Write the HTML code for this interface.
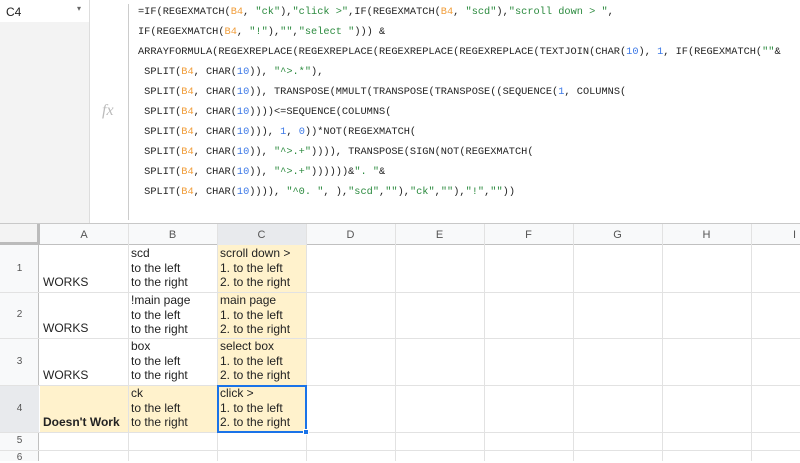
<!DOCTYPE html>
<html><head><style>
*{margin:0;padding:0;box-sizing:border-box}
body{width:800px;height:461px;overflow:hidden;background:#fff;font-family:"Liberation Sans",Arial,sans-serif;position:relative}
.a{position:absolute}
.f{font-family:"Liberation Mono",monospace;font-size:10.3px;color:#222;white-space:pre;line-height:20px}
.o{color:#f09d3a}.n{color:#3b78e7}.s{color:#2b8a3e}
.ch{font-size:11px;color:#555;text-align:center;line-height:20px;top:225px;height:20px}
.rn{font-size:10px;color:#555;text-align:center;width:39px;left:0}
.c{font-size:12px;color:#222;line-height:14.5px;white-space:pre}
.vl{width:1px;background:#e2e2e2}
.hl{height:1px;background:#e2e2e2}
</style></head><body>
<div class="a" style="left:0;top:0;width:90px;height:22px;background:#fff"></div>
<div class="a" style="left:0;top:22px;width:90px;height:202px;background:#f3f3f3"></div>
<div class="a" style="left:6px;top:5px;font-size:12px;color:#222">C4</div>
<div class="a" style="left:77px;top:4px;font-size:8px;color:#666">▾</div>
<div class="a" style="left:89px;top:0;width:1px;height:224px;background:#ddd"></div>
<div class="a" style="left:102px;top:102px;font-family:'Liberation Serif',serif;font-style:italic;font-size:16px;color:#bbb">fx</div>
<div class="a" style="left:128px;top:4px;width:1px;height:216px;background:#ccc"></div>
<div class="a f" style="left:138px;top:2px">=IF(REGEXMATCH(<span class="o">B4</span>, <span class="s">"ck"</span>),<span class="s">"click &gt;"</span>,IF(REGEXMATCH(<span class="o">B4</span>, <span class="s">"scd"</span>),<span class="s">"scroll down &gt; "</span>,
IF(REGEXMATCH(<span class="o">B4</span>, <span class="s">"!"</span>),<span class="s">""</span>,<span class="s">"select "</span>))) &amp;
ARRAYFORMULA(REGEXREPLACE(REGEXREPLACE(REGEXREPLACE(REGEXREPLACE(TEXTJOIN(CHAR(<span class="n">10</span>), <span class="n">1</span>, IF(REGEXMATCH(<span class="s">""</span>&amp;
 SPLIT(<span class="o">B4</span>, CHAR(<span class="n">10</span>)), <span class="s">"^&gt;.*"</span>),
 SPLIT(<span class="o">B4</span>, CHAR(<span class="n">10</span>)), TRANSPOSE(MMULT(TRANSPOSE(TRANSPOSE((SEQUENCE(<span class="n">1</span>, COLUMNS(
 SPLIT(<span class="o">B4</span>, CHAR(<span class="n">10</span>))))&lt;=SEQUENCE(COLUMNS(
 SPLIT(<span class="o">B4</span>, CHAR(<span class="n">10</span>))), <span class="n">1</span>, <span class="n">0</span>))*NOT(REGEXMATCH(
 SPLIT(<span class="o">B4</span>, CHAR(<span class="n">10</span>)), <span class="s">"^&gt;.+"</span>)))), TRANSPOSE(SIGN(NOT(REGEXMATCH(
 SPLIT(<span class="o">B4</span>, CHAR(<span class="n">10</span>)), <span class="s">"^&gt;.+"</span>))))))&amp;<span class="s">". "</span>&amp;
 SPLIT(<span class="o">B4</span>, CHAR(<span class="n">10</span>)))), <span class="s">"^0. "</span>, ),<span class="s">"scd"</span>,<span class="s">""</span>),<span class="s">"ck"</span>,<span class="s">""</span>),<span class="s">"!"</span>,<span class="s">""</span>))</div>
<div class="a" style="left:0;top:223px;width:800px;height:1px;background:#c8c8c8"></div>
<div class="a" style="left:0;top:224px;width:800px;height:21px;background:#f8f9fa;border-bottom:1px solid #c0c0c0"></div>
<div class="a" style="left:0;top:224px;width:40px;height:21px;background:#f3f3f3;border-right:3px solid #bbb;border-bottom:3px solid #bbb"></div>
<div class="a" style="left:0;top:245px;width:39px;height:216px;background:#f8f9fa;border-right:1px solid #c0c0c0"></div>
<div class="a" style="left:217px;top:224px;width:89px;height:21px;background:#e8eaed"></div>
<div class="a" style="left:0;top:385px;width:39px;height:47px;background:#e8eaed"></div>
<div class="a ch" style="left:40px;width:88px">A</div>
<div class="a ch" style="left:128px;width:89px">B</div>
<div class="a ch" style="left:217px;width:89px">C</div>
<div class="a ch" style="left:306px;width:89px">D</div>
<div class="a ch" style="left:395px;width:89px">E</div>
<div class="a ch" style="left:484px;width:89px">F</div>
<div class="a ch" style="left:573px;width:89px">G</div>
<div class="a ch" style="left:662px;width:89px">H</div>
<div class="a ch" style="left:751px;width:89px;text-align:left;padding-left:42px">I</div>
<div class="a rn" style="top:263px">1</div>
<div class="a rn" style="top:309px">2</div>
<div class="a rn" style="top:356px">3</div>
<div class="a rn" style="top:403px">4</div>
<div class="a rn" style="top:435px">5</div>
<div class="a rn" style="top:452px">6</div>
<div class="a" style="left:217px;top:245px;width:89px;height:187px;background:#fff2cc"></div>
<div class="a" style="left:40px;top:385px;width:177px;height:47px;background:#fff2cc"></div>
<div class="a vl" style="left:128px;top:224px;height:237px"></div>
<div class="a vl" style="left:217px;top:224px;height:237px"></div>
<div class="a vl" style="left:306px;top:224px;height:237px"></div>
<div class="a vl" style="left:395px;top:224px;height:237px"></div>
<div class="a vl" style="left:484px;top:224px;height:237px"></div>
<div class="a vl" style="left:573px;top:224px;height:237px"></div>
<div class="a vl" style="left:662px;top:224px;height:237px"></div>
<div class="a vl" style="left:751px;top:224px;height:237px"></div>
<div class="a hl" style="left:0;top:292px;width:800px"></div>
<div class="a hl" style="left:0;top:338px;width:800px"></div>
<div class="a hl" style="left:0;top:385px;width:800px"></div>
<div class="a hl" style="left:0;top:432px;width:800px"></div>
<div class="a hl" style="left:0;top:450px;width:800px"></div>
<div class="a c" style="left:43px;top:275px">WORKS</div>
<div class="a c" style="left:43px;top:321px">WORKS</div>
<div class="a c" style="left:43px;top:368px">WORKS</div>
<div class="a c" style="left:43px;top:415px;font-weight:bold">Doesn't Work</div>
<div class="a c" style="left:131px;top:246px">scd
to the left
to the right</div>
<div class="a c" style="left:131px;top:293px">!main page
to the left
to the right</div>
<div class="a c" style="left:131px;top:339px">box
to the left
to the right</div>
<div class="a c" style="left:131px;top:386px">ck
to the left
to the right</div>
<div class="a c" style="left:220px;top:246px">scroll down &gt;
1. to the left
2. to the right</div>
<div class="a c" style="left:220px;top:293px">main page
1. to the left
2. to the right</div>
<div class="a c" style="left:220px;top:339px">select box
1. to the left
2. to the right</div>
<div class="a c" style="left:220px;top:386px">click &gt;
1. to the left
2. to the right</div>
<div class="a" style="left:217px;top:385px;width:90px;height:48px;border:2px solid #1a73e8"></div>
<div class="a" style="left:303px;top:429px;width:6px;height:6px;background:#1a73e8;border:1px solid #fff"></div>
</body></html>
